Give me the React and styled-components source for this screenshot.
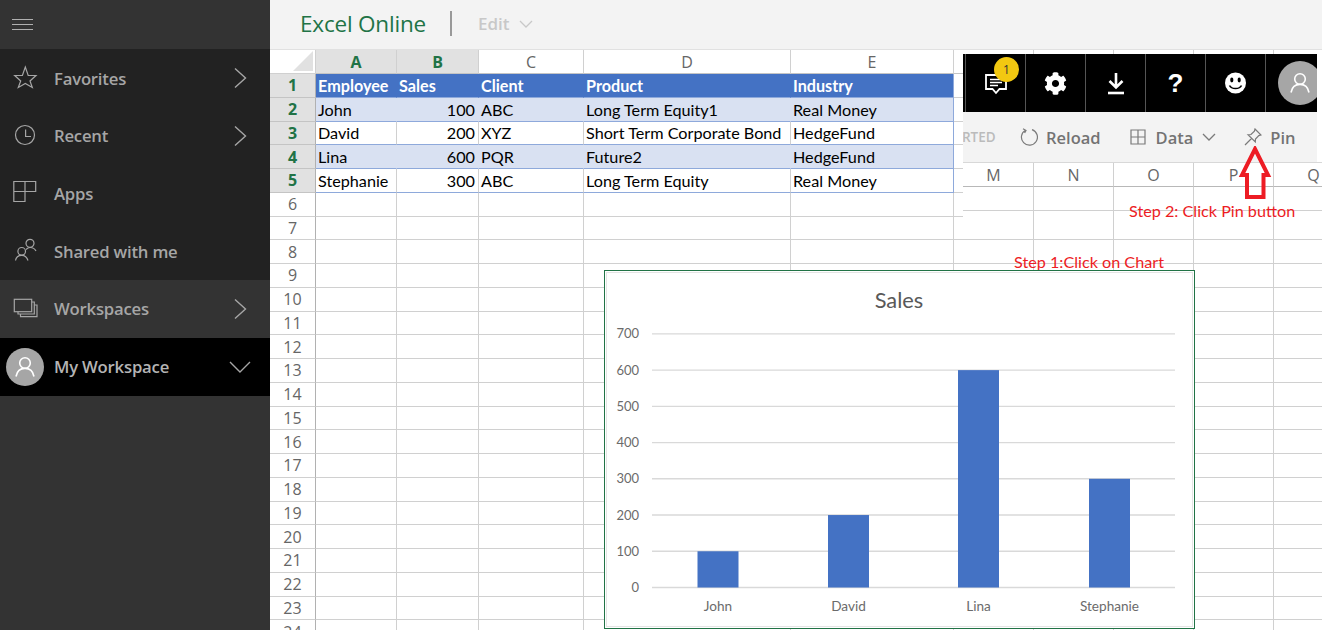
import React from "react";
import styled, { createGlobalStyle } from "styled-components";
import { FaCog } from "react-icons/fa";

const Global = createGlobalStyle`
  html, body { margin: 0; padding: 0; height: 100%; overflow: hidden; background: #fff; }
  #root { height: 100%; }
  * { box-sizing: border-box; }
`;

const UI = `"Open Sans", "Noto Sans", sans-serif`;
const CELL = `Lato, "Noto Sans", sans-serif`;

const Page = styled.div`
  display: flex;
  width: 1322px;
  height: 630px;
  overflow: hidden;
  font-family: ${UI};
`;

/* Sidebar */
const Sidebar = styled.nav`
  width: 270px;
  flex: none;
  display: flex;
  flex-direction: column;
  background: #333;
`;
const SideHeader = styled.div`
  height: 49px;
  flex: none;
  display: flex;
  align-items: center;
  padding-left: 12px;
  background: #333;
`;
const SideRow = styled.div`
  height: 57.75px;
  flex: none;
  display: flex;
  align-items: center;
  padding-left: 13px;
  background: ${(p) => (p.$tone === "hover" ? "#333" : p.$tone === "active" ? "#000" : "#222")};
  color: ${(p) => (p.$tone === "active" ? "#b4b4b4" : "#a6a6a6")};
`;
const SideIcon = styled.svg`
  width: 24px;
  height: 24px;
  flex: none;
  fill: none;
  stroke: #a6a6a6;
  stroke-width: 1.2;
  overflow: visible;
`;
const SideLabel = styled.span`
  margin-left: 17px;
  flex: 1;
  font-size: 16.7px;
  font-weight: 600;
  letter-spacing: -0.2px;
  white-space: nowrap;
  position: relative;
  top: ${(p) => p.$nudge || 0}px;
`;
const SideChevron = styled.svg`
  width: 24px;
  height: 24px;
  margin-right: 18px;
  flex: none;
  fill: none;
  stroke: #a6a6a6;
  stroke-width: 1.4;
`;
const Avatar = styled.div`
  width: ${(p) => p.$size}px;
  height: ${(p) => p.$size}px;
  border-radius: 50%;
  background: #a6a6a6;
  flex: none;
  display: flex;
  align-items: center;
  justify-content: center;
`;
const AvatarSlot = styled.div`
  margin-left: -7px;
  margin-right: -7px;
`;
const PersonGlyph = styled.svg`
  width: 22px;
  height: 22px;
  fill: none;
  stroke: #fff;
  stroke-width: 1.6;
`;

/* Main */
const Main = styled.main`
  flex: 1;
  min-width: 0;
  display: flex;
  flex-direction: column;
`;
const TopBar = styled.header`
  height: 50px;
  flex: none;
  display: flex;
  align-items: center;
  padding: 0 0 2px 30px;
  background: #f3f3f3;
  border-bottom: 1px solid #e1e1e1;
`;
const AppTitle = styled.h1`
  margin: 0;
  font-size: 22.5px;
  font-weight: 400;
  color: #217346;
  letter-spacing: -0.2px;
  white-space: nowrap;
`;
const TitleDivider = styled.span`
  width: 2px;
  height: 25px;
  margin: 0 26px 0 24px;
  background: #999;
`;
const EditMenu = styled.span`
  display: flex;
  align-items: center;
  gap: 10px;
  font-size: 17px;
  font-weight: 600;
  color: #c8c8c8;
`;
const MiniChevron = styled.svg`
  width: 14px;
  height: 14px;
  flex: none;
  fill: none;
  stroke: ${(p) => p.$color || "#c8c8c8"};
  stroke-width: 1.3;
`;

/* Sheet */
const Sheet = styled.section`
  position: relative;
  flex: 1;
  overflow: hidden;
  background: #fff;
`;
const Grid = styled.div`
  display: grid;
  grid-template-columns: 46px 81px 82px 105px 207px 163px repeat(5, 80px);
  grid-template-rows: 24px;
  grid-auto-rows: 23.75px;
`;
const Corner = styled.div`
  position: relative;
  background: #fff;
  border-right: 1px solid #d0d0d0;
  border-bottom: 1px solid #d0d0d0;
  &::after {
    content: "";
    position: absolute;
    right: 2px;
    bottom: 2px;
    width: 0;
    height: 0;
    border-style: solid;
    border-width: 0 0 20px 20px;
    border-color: transparent transparent #e1e1e1 transparent;
  }
`;
const ColHead = styled.div`
  display: flex;
  align-items: center;
  justify-content: center;
  font-size: 16px;
  font-weight: ${(p) => (p.$on ? 700 : 400)};
  color: ${(p) => (p.$on ? "#217346" : "#666")};
  background: ${(p) => (p.$on ? "#e1e1e1" : "#fff")};
  border-right: 1px solid #d0d0d0;
  border-bottom: 1px solid #c4c4c4;
`;
const RowHead = styled.div`
  display: flex;
  align-items: center;
  justify-content: center;
  font-size: 16px;
  font-weight: ${(p) => (p.$on ? 700 : 400)};
  color: ${(p) => (p.$on ? "#217346" : "#666")};
  background: ${(p) => (p.$on ? "#e1e1e1" : "#fff")};
  border-right: 1px solid #b1b1b1;
  border-bottom: 1px solid ${(p) => (p.$on ? "#c4c4c4" : "#d0d0d0")};
`;
const Cell = styled.div`
  display: flex;
  align-items: center;
  justify-content: ${(p) => (p.$num ? "flex-end" : "flex-start")};
  padding: 0 3px 0 2px;
  font-family: ${CELL};
  font-size: 16.2px;
  white-space: nowrap;
  overflow: visible;
  color: #000;
  border-right: 1px solid #d0d0d0;
  border-bottom: 1px solid #d0d0d0;
  ${(p) => p.$kind === "head" && `
    background: #4472c4; color: #fff; font-weight: 700; border-right-color: #4472c4; border-bottom-color: #8ea9db;
  `}
  ${(p) => p.$kind === "band" && `
    background: #d9e1f2; border-right-color: #d9e1f2; border-bottom-color: #8ea9db;
  `}
  ${(p) => p.$kind === "plain" && `
    background: #fff; border-bottom-color: #8ea9db;
  `}
  ${(p) => p.$last && `border-right-color: #8ea9db;`}
`;

/* Floating pasted command bar */
const Floating = styled.div`
  position: absolute;
  left: 693px;
  top: 4px;
  width: 359px;
  height: 181px;
  display: flex;
  flex-direction: column;
  overflow: hidden;
  background: #fff;
`;
const BlackBar = styled.div`
  width: 354px;
  height: 58px;
  flex: none;
  display: flex;
  padding-left: 2px;
  background: #000;
  overflow: hidden;
`;
const ToolCell = styled.div`
  position: relative;
  width: 60px;
  flex: none;
  display: flex;
  align-items: center;
  justify-content: center;
  border-left: 1px solid #555;
  color: #fff;
`;
const AvatarCell = styled(ToolCell)`
  justify-content: flex-start;
  padding-left: 12px;
  overflow: visible;
`;
const Badge = styled.span`
  position: absolute;
  left: 28px;
  top: 3px;
  width: 25px;
  height: 25px;
  border-radius: 50%;
  background: #f2c811;
  color: #333;
  font-size: 12px;
  display: flex;
  align-items: center;
  justify-content: center;
`;
const Help = styled.span`
  font-family: "Liberation Sans", sans-serif;
  font-size: 26px;
  font-weight: 700;
  line-height: 1;
`;
const ToolIcon = styled.svg`
  width: 26px;
  height: 26px;
  overflow: visible;
`;
const CmdBar = styled.div`
  width: 354px;
  height: 50px;
  flex: none;
  display: flex;
  align-items: center;
  background: #f3f3f3;
  color: #737373;
  font-size: 16.5px;
  font-weight: 600;
`;
const Faded = styled.span`
  font-size: 13.5px;
  color: #bbb;
  width: 58px;
  flex: none;
  margin-left: -1px;
  white-space: nowrap;
`;
const CmdItem = styled.span`
  display: flex;
  align-items: center;
  gap: ${(p) => p.$gap || 8}px;
  margin-right: ${(p) => p.$after || 0}px;
  margin-left: ${(p) => p.$before || 0}px;
  flex: none;
`;
const CmdIcon = styled.svg`
  width: 18px;
  height: 18px;
  fill: none;
  stroke: #7a7a7a;
  stroke-width: 1.2;
  flex: none;
`;
const MiniGrid = styled.div`
  margin-left: -9px;
  display: grid;
  grid-template-columns: repeat(5, 80px);
  grid-template-rows: 24px 24px 25px;
  border-top: 1px solid #d8d8d8;
`;
const MiniHead = styled.div`
  display: flex;
  align-items: center;
  justify-content: center;
  font-size: 16px;
  color: #666;
  border-right: 1px solid #d0d0d0;
  border-bottom: 1px solid #b8b8b8;
`;
const MiniCell = styled.div`
  border-right: 1px solid #d0d0d0;
  border-bottom: 1px solid ${(p) => (p.$open ? "transparent" : "#d0d0d0")};
`;

/* Annotations */
const Note = styled.span`
  position: absolute;
  left: ${(p) => p.$x}px;
  top: ${(p) => p.$y}px;
  font-family: ${CELL};
  font-size: 16.2px;
  line-height: 18px;
  color: #ed1c24;
  white-space: nowrap;
`;
const ArrowMark = styled.svg`
  position: absolute;
  left: 968px;
  top: 96px;
  width: 34px;
  height: 54px;
  fill: none;
  stroke: #ed1c24;
  stroke-width: 4;
`;

/* Chart */
const ChartFrame = styled.figure`
  position: absolute;
  left: 334px;
  top: 220px;
  width: 591px;
  height: 359px;
  margin: 0;
  background: #fff;
  border: 1px solid #217346;
  outline: 1px solid #e4e4e4;
  outline-offset: -3px;
`;
const ChartSvg = styled.svg`
  display: block;
  width: 589px;
  height: 357px;
  font-family: ${CELL};
`;

const people = [
  ["Employee", "Sales", "Client", "Product", "Industry"],
  ["John", "100", "ABC", "Long Term Equity1", "Real Money"],
  ["David", "200", "XYZ", "Short Term Corporate Bond", "HedgeFund"],
  ["Lina", "600", "PQR", "Future2", "HedgeFund"],
  ["Stephanie", "300", "ABC", "Long Term Equity", "Real Money"],
];
const columns = ["A", "B", "C", "D", "E", "", "", "", "", ""];
const kinds = ["head", "band", "plain", "band", "plain"];

const Chevron = () => (
  <SideChevron viewBox="0 0 24 24"><path d="M7 2.5 L17.5 12 L7 21.5" /></SideChevron>
);

const Person = () => (
  <PersonGlyph viewBox="0 0 22 22">
    <circle cx="11" cy="7" r="5.3" />
    <path d="M2 20.5 C3 15 6.5 12.4 11 12.4 C15.5 12.4 19 15 20 20.5" />
  </PersonGlyph>
);

const Sheetgrid = () => {
  const cells = [<Corner key="corner" />];
  columns.forEach((c, i) => cells.push(<ColHead key={`h${i}`} $on={i < 2}>{c}</ColHead>));
  for (let r = 0; r < 24; r++) {
    cells.push(<RowHead key={`r${r}`} $on={r < 5}>{r + 1}</RowHead>);
    for (let c = 0; c < 10; c++) {
      const value = r < 5 && c < 5 ? people[r][c] : "";
      cells.push(
        <Cell key={`${r}-${c}`} $kind={r < 5 && c < 5 ? kinds[r] : undefined} $num={r > 0 && c === 1} $last={r < 5 && c === 4}>
          {value}
        </Cell>
      );
    }
  }
  return <Grid>{cells}</Grid>;
};

const axis = [700, 600, 500, 400, 300, 200, 100, 0];
const bars = [
  { name: "John", value: 100, x: 92.5 },
  { name: "David", value: 200, x: 223 },
  { name: "Lina", value: 600, x: 353 },
  { name: "Stephanie", value: 300, x: 484 },
];
const baseY = 316.5;
const unit = 0.3623;

const SalesChart = () => (
  <ChartFrame>
    <ChartSvg viewBox="0 0 589 357">
      <text x="294" y="37" textAnchor="middle" fontSize="21.8" fill="#595959">Sales</text>
      {axis.map((v) => (
        <g key={v}>
          <line x1="47" x2="570" y1={baseY - v * unit} y2={baseY - v * unit} stroke="#d9d9d9" strokeWidth="1.4" />
          <text x="34" y={baseY - v * unit + 4.5} textAnchor="end" fontSize="13" fill="#6b6b6b">{v}</text>
        </g>
      ))}
      {bars.map((b) => (
        <g key={b.name}>
          <rect x={b.x} y={baseY - b.value * unit} width="41" height={b.value * unit} fill="#4472c4" />
          <text x={b.x + 20.5} y="340" textAnchor="middle" fontSize="13.6" fill="#6b6b6b">{b.name}</text>
        </g>
      ))}
    </ChartSvg>
  </ChartFrame>
);

export default function App() {
  return (
    <Page>
      <Global />
      <Sidebar>
        <SideHeader>
          <svg width="21" height="12" viewBox="0 0 21 12" stroke="#b0b0b0" strokeWidth="1">
            <path d="M0 .5H21M0 5.5H21M0 10.5H21" />
          </svg>
        </SideHeader>
        <SideRow>
          <SideIcon viewBox="0 0 24 24"><path d="M12.3 1 L15.2 9.5 L23 9.5 L17 15 L19.3 21.5 L12.3 17.5 L5.3 21.5 L7.7 15 L1.7 9.5 L9.4 9.5 Z" /></SideIcon>
          <SideLabel $nudge={1}>Favorites</SideLabel>
          <Chevron />
        </SideRow>
        <SideRow>
          <SideIcon viewBox="0 0 24 24"><circle cx="12" cy="11" r="9.5" /><path d="M12.6 5.5 V12.5 H18" /></SideIcon>
          <SideLabel>Recent</SideLabel>
          <Chevron />
        </SideRow>
        <SideRow>
          <SideIcon viewBox="0 0 24 24"><path d="M.8 .5 H22.7 V10.5 H12 V20.5 H.8 Z M12 .5 V10.5 H.8" /></SideIcon>
          <SideLabel>Apps</SideLabel>
        </SideRow>
        <SideRow>
          <SideIcon viewBox="0 0 24 24">
            <circle cx="17" cy="4.3" r="4" />
            <circle cx="8.7" cy="12.3" r="3.8" />
            <path d="M2.5 21.5 C3 18 5.5 16.3 8.7 16.3 C12 16.3 14 18 15 21.5" />
            <path d="M13 10.5 C14.5 9 16 8.5 17 8.5 C20 8.5 22 10 23 12" />
          </SideIcon>
          <SideLabel>Shared with me</SideLabel>
        </SideRow>
        <SideRow $tone="hover">
          <SideIcon viewBox="0 0 24 24">
            <rect x="1.3" y="2.3" width="17.4" height="12.4" />
            <path d="M18.7 5 H21.3 V17 H5 V14.7" />
            <path d="M21.3 8 H24 V19.7 H7.5 V17" />
          </SideIcon>
          <SideLabel>Workspaces</SideLabel>
          <Chevron />
        </SideRow>
        <SideRow $tone="active">
          <AvatarSlot><Avatar $size={38}><Person /></Avatar></AvatarSlot>
          <SideLabel>My Workspace</SideLabel>
          <SideChevron viewBox="0 0 24 24"><path d="M2 7 L12 17 L22 7" /></SideChevron>
        </SideRow>
      </Sidebar>

      <Main>
        <TopBar>
          <AppTitle>Excel Online</AppTitle>
          <TitleDivider />
          <EditMenu>
            Edit
            <MiniChevron viewBox="0 0 14 14"><path d="M1 4 L7 10 L13 4" /></MiniChevron>
          </EditMenu>
        </TopBar>
        <Sheet>
          <Sheetgrid />

          <Floating>
            <BlackBar>
              <ToolCell>
                <ToolIcon viewBox="0 0 26 26" fill="none" stroke="#fff" strokeWidth="1.8">
                  <path d="M3 5 H23 V19 H16.5 L13 23 L9.5 19 H3 Z" />
                  <path d="M7 9.5 H19 M7 12.5 H19 M7 15.5 H15" strokeWidth="1.3" />
                </ToolIcon>
                <Badge>1</Badge>
              </ToolCell>
              <ToolCell><FaCog size={23} /></ToolCell>
              <ToolCell>
                <ToolIcon viewBox="0 0 26 26" fill="none" stroke="#fff" strokeWidth="2.6">
                  <path d="M13 3 V17 M6.5 11 L13 17.5 L19.5 11" />
                  <path d="M5 23 H21" />
                </ToolIcon>
              </ToolCell>
              <ToolCell><Help>?</Help></ToolCell>
              <ToolCell>
                <ToolIcon viewBox="0 0 26 26">
                  <circle cx="12.5" cy="13" r="10.5" fill="#fff" />
                  <ellipse cx="8.8" cy="10" rx="1.6" ry="2.4" fill="#000" />
                  <ellipse cx="16.2" cy="10" rx="1.6" ry="2.4" fill="#000" />
                  <path d="M6.5 15.5 C8.5 19.5 16.5 19.5 18.5 15.5" fill="none" stroke="#000" strokeWidth="1.6" />
                </ToolIcon>
              </ToolCell>
              <AvatarCell><Avatar $size={44}><Person /></Avatar></AvatarCell>
            </BlackBar>
            <CmdBar>
              <Faded>RTED</Faded>
              <CmdItem $after={28}>
                <CmdIcon viewBox="0 0 18 18"><path d="M5.5 2.2 A8 8 0 1 0 12 1.6 M3 .8 L6 2.4 L4.6 5" /></CmdIcon>
                Reload
              </CmdItem>
              <CmdItem $gap={9} $after={9}>
                <CmdIcon viewBox="0 0 18 18"><path d="M2 2 H16 V16 H2 Z M9 2 V16 M2 9 H16" /></CmdIcon>
                Data
              </CmdItem>
              <MiniChevron $color="#7a7a7a" viewBox="0 0 14 14"><path d="M1 4 L7 10 L13 4" /></MiniChevron>
              <CmdItem $gap={8} $before={28}>
                <CmdIcon viewBox="0 0 18 18">
                  <path d="M11 1 L17 7 L14.8 7.6 L11.5 11 L11.3 14 L4 6.8 L7 6.5 L10.4 3.2 Z M7.5 10.5 L1 17" />
                </CmdIcon>
                Pin
              </CmdItem>
            </CmdBar>
            <MiniGrid>
              {["M", "N", "O", "P", "Q"].map((l) => <MiniHead key={l}>{l}</MiniHead>)}
              {[0, 1, 2, 3, 4].map((i) => <MiniCell key={`a${i}`} />)}
              {[0, 1, 2, 3, 4].map((i) => <MiniCell key={`b${i}`} $open />)}
            </MiniGrid>
          </Floating>

          <ArrowMark viewBox="0 0 34 54">
            <path d="M17 3 L30 29 H25.5 V51 H9 V29 H4 Z" />
          </ArrowMark>
          <Note $x={859} $y={152}>Step 2: Click Pin button</Note>
          <Note $x={744} $y={203}>Step 1:Click on Chart</Note>

          <SalesChart />
        </Sheet>
      </Main>
    </Page>
  );
}
